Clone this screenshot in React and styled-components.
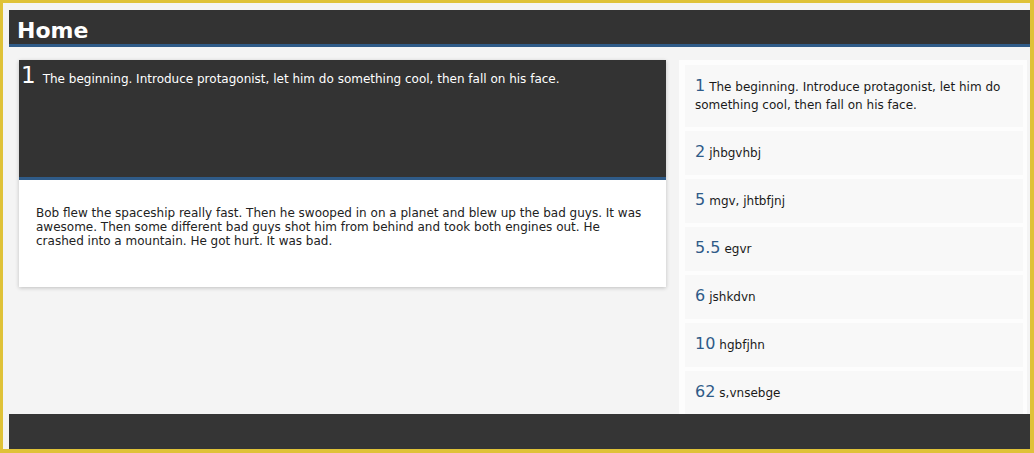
import styled, { createGlobalStyle } from 'styled-components';

const GlobalStyle = createGlobalStyle`
  html, body {
    margin: 0;
    padding: 0;
    height: 100%;
  }
  body {
    font-family: "DejaVu Sans", Verdana, sans-serif;
    background: #dfc238;
  }
  #root {
    height: 100%;
  }
`;

const Frame = styled.div`
  box-sizing: border-box;
  margin: 3px 4px 0 3px;
  height: calc(100vh - 7px);
  background: #f4f4f4;
  padding: 7px 0 0 6px;
  display: flex;
  flex-direction: column;
  overflow: hidden;
`;

const Header = styled.header`
  background: #333;
  border-bottom: 3px solid #2f5b88;
  height: 34px;
  padding-left: 8px;
  display: flex;
  align-items: center;
  flex-shrink: 0;
`;

const Title = styled.h1`
  margin: 0;
  color: #fff;
  font-size: 22px;
  font-weight: bold;
  line-height: 1;
  padding-top: 8px;
`;

const Main = styled.main`
  flex: 1;
  min-height: 0;
  display: flex;
  overflow: hidden;
`;

const Story = styled.section`
  flex: 1;
  padding: 13px 13px 0 10px;
`;

const Card = styled.article`
  background: #fff;
  box-shadow: 0 1px 4px rgba(0, 0, 0, 0.22);
`;

const CardHead = styled.div`
  background: #333;
  border-bottom: 3px solid #2f5b88;
  height: 117px;
  box-sizing: content-box;
  padding: 0 2px;
  color: #fff;
  font-size: 12px;
  display: flex;
  align-items: baseline;
  gap: 7px;
`;

const BigNum = styled.span`
  font-size: 23px;
  line-height: 30px;
`;

const CardBody = styled.div`
  padding: 26px 17px 39px;
  font-size: 12px;
  line-height: 14px;
  color: #222;
`;

const Sidebar = styled.aside`
  width: 348px;
  margin: 13px 3px 0 0;
  background: #fdfdfd;
  padding: 5px 4px 0 6px;
  box-sizing: border-box;
`;

const Item = styled.div`
  background: #f8f8f8;
  margin-bottom: 4px;
  padding: 13px 10px;
  font-size: 12px;
  line-height: 18px;
  color: #1a1a1a;
`;

const Num = styled.span`
  color: #2f5b88;
  font-size: 16px;
  line-height: 1;
  margin-right: 4px;
`;

const Footer = styled.footer`
  height: 35px;
  background: #353535;
  flex-shrink: 0;
`;

const beats = [
  { n: '1', text: 'The beginning. Introduce protagonist, let him do something cool, then fall on his face.' },
  { n: '2', text: 'jhbgvhbj' },
  { n: '5', text: 'mgv, jhtbfjnj' },
  { n: '5.5', text: 'egvr' },
  { n: '6', text: 'jshkdvn' },
  { n: '10', text: 'hgbfjhn' },
  { n: '62', text: 's,vnsebge' },
];

const App = () => (
  <>
    <GlobalStyle />
    <Frame>
      <Header>
        <Title>Home</Title>
      </Header>
      <Main>
        <Story>
          <Card>
            <CardHead>
              <BigNum>1</BigNum>
              <span>{beats[0].text}</span>
            </CardHead>
            <CardBody>
              Bob flew the spaceship really fast. Then he swooped in on a planet and blew up the bad guys. It was
              awesome. Then some different bad guys shot him from behind and took both engines out. He
              crashed into a mountain. He got hurt. It was bad.
            </CardBody>
          </Card>
        </Story>
        <Sidebar>
          {beats.map((b) => (
            <Item key={b.n}>
              <Num>{b.n}</Num>
              {b.text}
            </Item>
          ))}
        </Sidebar>
      </Main>
      <Footer />
    </Frame>
  </>
);

export default App;
